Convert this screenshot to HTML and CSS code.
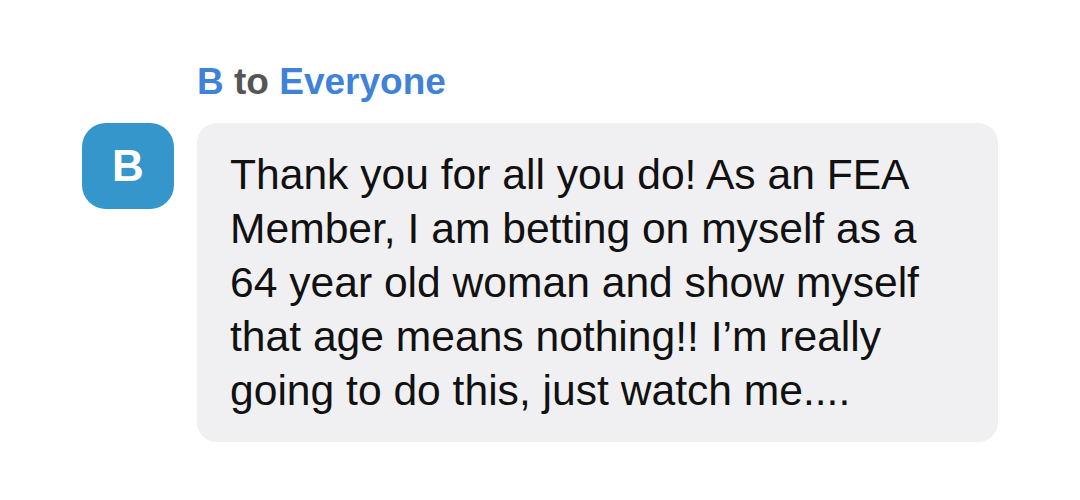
FILE: index.html
```html
<!DOCTYPE html>
<html lang="en">
<head>
<meta charset="utf-8">
<link rel="stylesheet" href="styles.css">
</head>
<body>
<div class="chat">
  <div class="message">
    <div class="spacer"></div>
    <div class="sender"><span class="name">B</span> <span class="to">to</span> <span class="name">Everyone</span></div>
    <div class="avatar">B</div>
    <div class="bubble">Thank you for all you do! As an FEA Member, I am betting on myself as a 64 year old woman and show myself that age means nothing!! I’m really going to do this, just watch me....</div>
  </div>
</div>
</body>
</html>
```
FILE: styles.css
```css
html, body {
  margin: 0;
  padding: 0;
  background: #ffffff;
}
body {
  font-family: "Liberation Sans", Arial, Helvetica, sans-serif;
  width: 1080px;
  height: 500px;
  overflow: hidden;
}
.chat {
  padding: 61px 0 0 82px;
}
.message {
  display: grid;
  grid-template-columns: 92px 801px;
  column-gap: 23px;
  row-gap: 20px;
  align-items: start;
}
.sender {
  font-size: 37px;
  font-weight: 700;
  line-height: 42px;
  white-space: nowrap;
}
.name {
  color: #3f82d8;
}
.to {
  color: #555555;
}
.avatar {
  width: 92px;
  height: 86px;
  border-radius: 24px;
  background: #3496cb;
  color: #ffffff;
  font-size: 44px;
  font-weight: 700;
  display: flex;
  align-items: center;
  justify-content: center;
}
.bubble {
  background: #f0f0f2;
  border-radius: 20px;
  padding: 24px 50px 25px 33px;
  font-size: 42.6px;
  line-height: 54px;
  color: #111111;
}
```
